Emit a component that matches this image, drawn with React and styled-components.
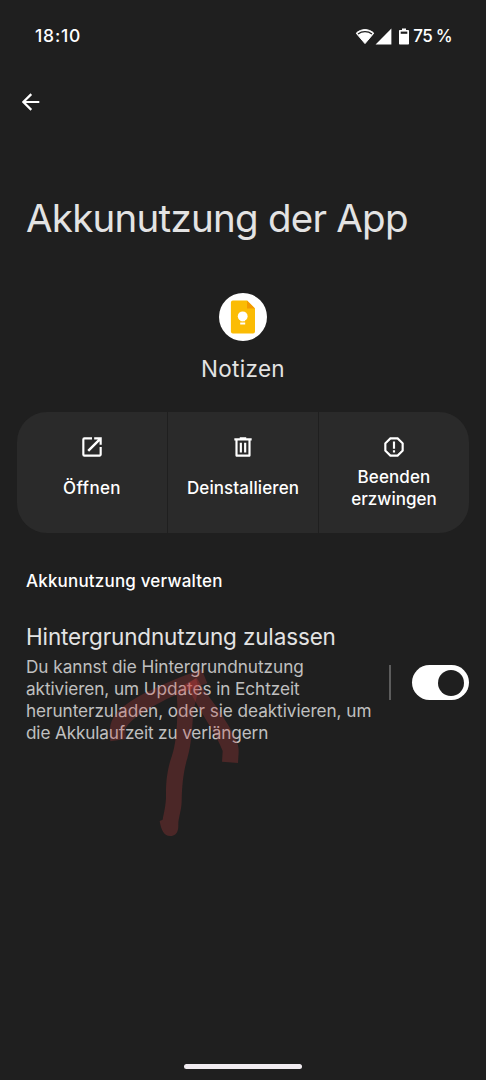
import { useState } from "react";
import styled, { createGlobalStyle } from "styled-components";

const actions = [
  { id: "open", lines: [{ text: "Öffnen", spacing: "0.35px" }] },
  { id: "uninstall", lines: [{ text: "Deinstallieren", spacing: "0.1px" }] },
  {
    id: "stop",
    lines: [
      { text: "Beenden", spacing: "0.1px" },
      { text: "erzwingen", spacing: "0" },
    ],
  },
];

const description = [
  { text: "Du kannst die Hintergrundnutzung", spacing: "-0.03px" },
  { text: "aktivieren, um Updates in Echtzeit", spacing: "-0.07px" },
  { text: "herunterzuladen, oder sie deaktivieren, um", spacing: "-0.06px" },
  { text: "die Akkulaufzeit zu verlängern", spacing: "-0.15px" },
];

const ActionIcon = ({ id }) => (
  <svg width="26" height="26" viewBox="0 0 24 24" fill="currentColor">
    {id === "open" && (
      <path d="M19 19H5V5h7V3H5a2 2 0 0 0-2 2v14a2 2 0 0 0 2 2h14c1.1 0 2-.9 2-2v-7h-2v7zM14 3v2h3.400l-9.700 9.700 1.600 1.600L19 6.600V10h2V3h-7z" />
    )}
    {id === "uninstall" && (
      <path d="M15 4V3H9v1H4v2h1v13.500c0 .9.600 1.500 1.500 1.500h11c.9 0 1.500-.6 1.500-1.500V6h1V4h-5zm2 15H7V6h10v13zM9 8h2v9H9zm4 0h2v9h-2z" />
    )}
    {id === "stop" && (
      <path d="M15.73 3H8.27L3 8.27v7.46L8.27 21h7.46L21 15.73V8.27L15.73 3zM19 14.9L14.9 19H9.1L5 14.9V9.1L9.1 5h5.8L19 9.1v5.8zM11 7h2v6.5h-2zM11 15h2v2h-2z" />
    )}
  </svg>
);

const App = () => {
  const [allowed, setAllowed] = useState(true);

  return (
    <>
      <GlobalStyle />
      <Screen>
        <StatusBar>
          <Clock>18:10</Clock>
          <StatusIcons>
            <svg width="20" height="17" viewBox="0 0 20 17">
              <path d="M1.200 5.200C6 .4 14 .4 18.800 5.200L10 15.600z" fill="#fff" stroke="#fff" strokeLinejoin="round" />
              <path d="M3 5.900C7 2.800 13 2.800 17 5.900" fill="none" stroke="#1f1f1f" strokeWidth="1.300" />
            </svg>
            <svg width="17" height="17" viewBox="0 0 17 17">
              <path d="M16.400 .6V16.400H.6z" fill="#fff" />
            </svg>
            <svg className="battery" width="10" height="17" viewBox="0 0 10 17">
              <path d="M3 .4h4v1.500h2.200a.8.8 0 0 1 .8.8v13a.8.8 0 0 1-.8.800H.8a.8.8 0 0 1-.8-.8v-13a.8.8 0 0 1 .8-.8H3z" fill="#fff" />
              <path d="M1.700 3.600h6.600v2.200H1.700z" fill="#1f1f1f" />
            </svg>
            <Percent>75 %</Percent>
          </StatusIcons>
        </StatusBar>

        <BackButton aria-label="Zurück">
          <svg width="18" height="18" viewBox="0 0 18 18" fill="none" stroke="#fff" strokeWidth="2.200">
            <path d="M17.300 9H1.800M9.300 1.100L1.400 9l7.900 7.900" />
          </svg>
        </BackButton>

        <Title>Akkunutzung der App</Title>

        <AppInfo>
          <svg width="48" height="48" viewBox="0 0 48 48">
            <circle cx="24" cy="24" r="24" fill="#fff" />
            <path d="M13.500 7.500H28L36 15.500V38.500a2 2 0 0 1-2 2H13.900a2 2 0 0 1-2-2V9.500a2 2 0 0 1 2-2z" fill="#fbbc04" />
            <path d="M28 7.500L36 15.500H28z" fill="#f29900" />
            <circle cx="23.700" cy="23.300" r="4.900" fill="#fff" />
            <path d="M21.500 26h4.500v2.300h-4.500zM21.200 29.500h5v2h-5z" fill="#fff" />
          </svg>
          <AppName>Notizen</AppName>
        </AppInfo>

        <Actions>
          {actions.map((item) => (
            <Action key={item.id}>
              <ActionIcon id={item.id} />
              <ActionLabel>
                {item.lines.map((line) => (
                  <Line key={line.text} $spacing={line.spacing}>
                    {line.text}
                  </Line>
                ))}
              </ActionLabel>
            </Action>
          ))}
        </Actions>

        <SectionTitle>Akkunutzung verwalten</SectionTitle>

        <Setting>
          <SettingText>
            <h3>Hintergrundnutzung zulassen</h3>
            <p>
              {description.map((line) => (
                <Line key={line.text} $spacing={line.spacing}>
                  {line.text}
                </Line>
              ))}
            </p>
          </SettingText>
          <Divider />
          <Switch
            role="switch"
            aria-checked={allowed}
            $on={allowed}
            onClick={() => setAllowed(!allowed)}
          >
            <Knob />
          </Switch>
          <Scribble width="150" height="190" viewBox="0 0 450 570">
            <path d="M31 259C26 215 32 195 52 172C90 130 190 84 305 43L322 85C270 103 220 122 185 140C130 167 85 200 76 222L78 252z" />
            <path d="M230 118L232 150C232 240 225 280 210 320C197 370 198 400 198 430C196 460 190 480 188 494L179 498C183 525 193 543 210 543C228 543 235 530 235 512C234 490 244 470 245 440C246 390 250 350 262 310C275 265 276 220 280 170L296 100L288 70L255 88z" />
            <path d="M258 90L290 68C315 115 350 150 375 195C400 235 418 265 416 290L414 324L366 320L368 288C350 240 320 200 295 155z" />
          </Scribble>
        </Setting>

        <HomeBar />
      </Screen>
    </>
  );
};
export default App;

const GlobalStyle = createGlobalStyle`
  * {
    box-sizing: border-box;
  }

  body {
    margin: 0;
    background: #1f1f1f;
  }

  h1, h2, h3, p {
    margin: 0;
    font-weight: 400;
  }

  button {
    padding: 0;
    border: none;
    background: none;
    color: inherit;
    font: inherit;
    cursor: pointer;
  }

  svg {
    display: block;
  }
`;

const Screen = styled.main`
  display: flex;
  flex-direction: column;
  width: 486px;
  height: 1080px;
  overflow: hidden;
  background: #1f1f1f;
  color: #fff;
  font-family: Inter, Roboto, sans-serif;
  white-space: nowrap;
`;

const StatusBar = styled.header`
  display: flex;
  justify-content: space-between;
  align-items: center;
  height: 72px;
  padding: 0 34px 0 35px;
`;

const Clock = styled.span`
  margin-top: -1px;
  font-size: 17.500px;
  font-weight: 500;
  letter-spacing: 0.8px;
`;

const StatusIcons = styled.div`
  display: flex;
  align-items: center;

  .battery {
    margin: 0 4.500px 0 7px;
  }
`;

const Percent = styled.span`
  font-size: 17px;
  font-weight: 500;
  letter-spacing: -0.7px;
`;

const BackButton = styled.button`
  width: 18px;
  height: 18px;
  margin: 21px 0 0 22px;
`;

const Title = styled.h1`
  margin: 82.500px 0 0 26px;
  color: #e3e3e3;
  font-size: 38.500px;
  line-height: 48px;
  letter-spacing: -0.75px;
`;

const AppInfo = styled.section`
  display: flex;
  flex-direction: column;
  align-items: center;
  margin-top: 51.500px;
`;

const AppName = styled.h2`
  margin-top: 13.500px;
  color: #e3e3e3;
  font-size: 22.500px;
  line-height: 28px;
  letter-spacing: 0.3px;
`;

const Actions = styled.div`
  display: grid;
  grid-template-columns: 150px 150px 150px;
  gap: 1px;
  height: 121px;
  margin: 29.500px 17px 0;
  overflow: hidden;
  border-radius: 30px;
`;

const Action = styled.button`
  display: flex;
  flex-direction: column;
  align-items: center;
  padding-top: 21.500px;
  background: #2a2a2a;
`;

const ActionLabel = styled.span`
  display: flex;
  flex-direction: column;
  justify-content: center;
  height: 44px;
  margin-top: 6.500px;
  font-size: 17px;
  line-height: 22px;
  font-weight: 500;
`;

const SectionTitle = styled.h2`
  margin: 37px 0 0 26px;
  font-size: 17px;
  line-height: 22px;
  font-weight: 500;
  letter-spacing: 0.18px;
`;

const Setting = styled.section`
  position: relative;
  display: flex;
  align-items: center;
  margin-top: 31px;
  padding: 0 17px 0 26px;
`;

const SettingText = styled.div`
  flex: 1;

  h3 {
    color: #e3e3e3;
    font-size: 22.500px;
    line-height: 28px;
    letter-spacing: -0.14px;
  }

  p {
    margin-top: 5px;
    color: #c0c0c0;
    font-size: 17.200px;
    line-height: 22px;
  }
`;

const Line = styled.span`
  display: block;
  letter-spacing: ${({ $spacing }) => $spacing};
`;

const Divider = styled.div`
  width: 1.500px;
  height: 35px;
  margin: -2px 21.500px 0 0;
  background: #5c5c5c;
`;

const Switch = styled.button`
  display: flex;
  align-items: center;
  justify-content: ${({ $on }) => ($on ? "flex-end" : "flex-start")};
  width: 57px;
  height: 35px;
  margin-top: -2px;
  padding: 0 5px;
  border-radius: 18px;
  background: #fff;
`;

const Knob = styled.span`
  width: 26px;
  height: 26px;
  border-radius: 50%;
  background: #1f1f1f;
`;

/* hand-drawn marker arrow lying over the description */
const Scribble = styled.svg`
  position: absolute;
  top: 32px;
  left: 100px;
  fill: rgba(200, 60, 60, 0.26);
  pointer-events: none;
`;

const HomeBar = styled.div`
  width: 118px;
  height: 5px;
  margin: auto auto 11px;
  border-radius: 3px;
  background: #f1ecf1;
`;
